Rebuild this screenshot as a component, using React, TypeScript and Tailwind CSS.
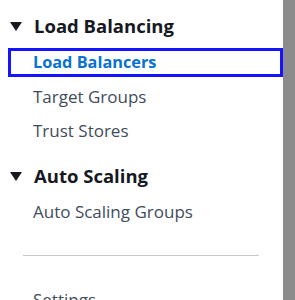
export default function App() {
  return (
    <div className="flex h-[300px] w-[295px] overflow-hidden bg-white font-['Open_Sans',sans-serif]">
      <nav className="flex-1 pt-[14px]">
        {/* Load Balancing */}
        <div className="flex h-[24px] items-center">
          <span className="ml-[10px] w-[24px] text-[#16191f]">
            <svg width="12" height="9" viewBox="0 0 12 9">
              <path d="M0 0h12L6 9z" fill="currentColor" />
            </svg>
          </span>
          <span className="text-[18.5px] font-bold text-[#16191f]">Load Balancing</span>
        </div>
        <div className="ml-[8px] mt-[10px] flex h-[29px] items-center border-[3px] border-[#1414ff] pl-[22px]">
          <span className="text-[16.3px] font-bold text-[#0972d3]">Load Balancers</span>
        </div>
        <div className="mt-[3px] flex h-[34px] items-center pl-[33px] text-[17px] text-[#414d5c]">Target Groups</div>
        <div className="flex h-[34px] items-center pl-[33px] text-[17px] text-[#414d5c]">Trust Stores</div>

        {/* Auto Scaling */}
        <div className="mt-[16px] flex h-[24px] items-center">
          <span className="ml-[10px] w-[24px] text-[#16191f]">
            <svg width="12" height="9" viewBox="0 0 12 9">
              <path d="M0 0h12L6 9z" fill="currentColor" />
            </svg>
          </span>
          <span className="text-[18.5px] font-bold text-[#16191f]">Auto Scaling</span>
        </div>
        <div className="mt-[7px] flex h-[34px] items-center pl-[33px] text-[17px] text-[#414d5c]">Auto Scaling Groups</div>

        <div className="ml-[23px] mr-[24px] mt-[26px] h-px bg-[#c6c6cd]" />
        <div className="mt-[27px] flex h-[34px] items-center pl-[33px] text-[17px] text-[#414d5c]">Settings</div>
      </nav>
      <div className="h-[300px] w-[12px] bg-[#8c8c8c]" />
    </div>
  );
}
